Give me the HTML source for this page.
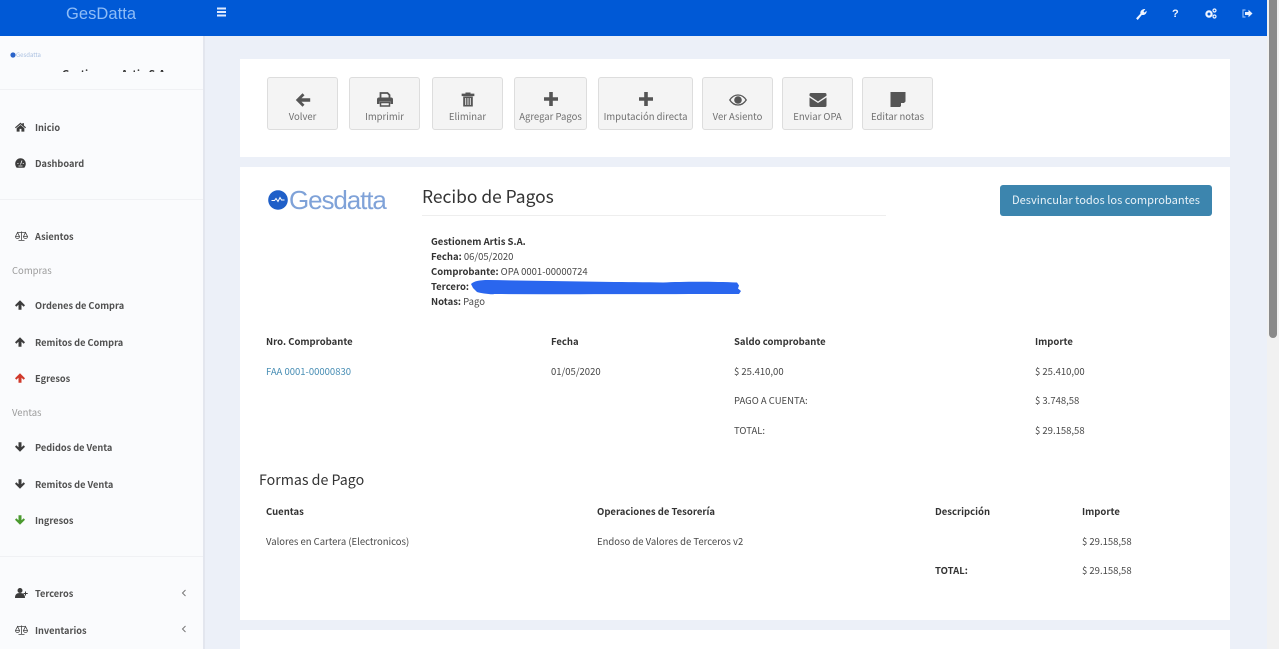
<!DOCTYPE html>
<html lang="es"><head><meta charset="utf-8"><title>GesDatta</title>
<style>
html,body{margin:0;padding:0;width:1279px;height:649px;overflow:hidden;background:#ecf0f8}
body{position:relative;font-family:"Noto Sans CJK JP","Liberation Sans",sans-serif;color:#484848;font-size:9.5px}
.a{position:absolute;white-space:nowrap;line-height:14px}
.m{margin-top:1px}
.b{font-weight:700;color:#333}
.box{position:absolute;background:#fff}
.btn{position:absolute;top:77px;height:51px;background:#f4f4f4;border:1px solid #ddd;border-radius:3px;color:#707070;text-align:center;font-size:9.5px;box-sizing:content-box}
.btn svg{position:absolute;left:50%;top:15px;transform:translateX(-50%)}
.btn span{position:absolute;left:0;right:0;top:31px;line-height:14px;white-space:nowrap}
.nav{position:absolute;left:35px;font-weight:700;font-size:9.2px;color:#505050;line-height:14px;white-space:nowrap}
.sec{position:absolute;left:12px;color:#9a9a9a;font-size:9.5px;line-height:14px}
.ic{position:absolute;left:14px;margin-top:1px}
.hr{position:absolute;left:0;width:203px;height:1px;background:#f0f1f4}
</style></head><body>
<div style="position:absolute;left:0;top:0;width:1267px;height:36px;background:#0059d6"></div>
<div style="position:absolute;left:1267px;top:0;width:12px;height:649px;background:#f1f1f1"></div>
<div style="position:absolute;left:1269px;top:0;width:8px;height:338px;background:#8a8a8a;border-radius:0 0 4px 4px"></div>
<div class="a m" style="left:66px;top:3px;font:300 16.5px/20px 'Liberation Sans',sans-serif;color:#8fbdf7;letter-spacing:.05px">GesDatta</div>
<svg style="position:absolute;left:216px;top:7px" width="11" height="10"><path d="M1 1.500h9M1 5h9M1 8.500h9" stroke="#dfeaff" stroke-width="2"/></svg>

<svg style="position:absolute;left:1135px;top:8px" width="12" height="12" viewBox="0 0 11 11"><path d="M1 9.500l4-4.300C4.500 3.300 6 .6 9.500 1L7.800 3l.9 1.200L10.600 2.500C11 5.300 8.500 7 6.300 6.300L2.500 11z" fill="#f0f5ff"/></svg>
<div class="a m" style="left:1172px;top:5px;font:700 11px/16px 'Liberation Sans',sans-serif;color:#f0f5ff">?</div>
<svg style="position:absolute;left:1205px;top:8px" width="12" height="11" viewBox="0 0 12 11"><circle cx="4" cy="6" r="2.600" fill="none" stroke="#f0f5ff" stroke-width="2.200"/><circle cx="9.500" cy="2.500" r="1.500" fill="none" stroke="#f0f5ff" stroke-width="1.200"/><circle cx="9.500" cy="8.500" r="1.500" fill="none" stroke="#f0f5ff" stroke-width="1.200"/></svg>
<svg style="position:absolute;left:1242px;top:9px" width="11" height="9" viewBox="0 0 11 9"><path d="M3.500 1H1v7h2.500" fill="none" stroke="#8db9f5" stroke-width="1.200"/><path d="M3 3h3.500V.8L10.500 4.500 6.500 8.200V6H3z" fill="#e8f0ff"/></svg>

<div style="position:absolute;left:0;top:36px;width:203px;height:613px;background:#fafbfd;border-right:2px solid #e3e6ee"></div>
<svg style="position:absolute;left:10px;top:52px" width="6" height="6"><circle cx="3" cy="3" r="2.600" fill="#2a63c9"/></svg>
<div class="a m" style="left:16px;top:49px;font-size:6px;line-height:10px;color:#a9bfe0">Gesdatta</div>
<div class="a b m" style="left:62px;top:67px;height:4px;line-height:14px;overflow:hidden;font-size:10.500px;word-spacing:1px">Gestionem Artis S.A.</div>
<div class="hr" style="top:89px"></div><div class="hr" style="top:199px"></div><div class="hr" style="top:556px"></div>

<svg class="ic" style="top:121px;left:15px" width="11" height="10" viewBox="0 0 12 10"><path d="M6 .2L0 5.400l.8 1L6 2l5.200 4.400.8-1L9.700 3.400V.8H8v1.200zM1.800 6.300V10H5V7h2v3h3.200V6.300L6 2.800z" fill="#3c3c3c"/></svg>
<div class="nav" style="top:120px">Inicio</div>
<svg class="ic" style="top:157px;left:15px" width="11" height="10" viewBox="0 0 11 10"><path d="M5.500 .3a5.300 5.300 0 0 0-5.300 5.300c0 1.800.6 3 1.500 4.100h7.600c.9-1.100 1.500-2.300 1.500-4.100A5.300 5.300 0 0 0 5.500 .3z" fill="#3c3c3c"/><path d="M5.500 6.500l1.500-4M2.300 5.500h1.200M7.700 5.500h1.200M3.500 8h4" stroke="#fafbfd" stroke-width=".8"/></svg>
<div class="nav" style="top:156px">Dashboard</div>

<svg class="ic" style="top:230px;left:15px" width="13" height="10" viewBox="0 0 13 10" fill="none" stroke="#444" stroke-width=".8"><path d="M6.500 .5v8.500M3.500 9.500h6M2 1.500h9M2.500 1.500L.5 5.500h4zM10.500 1.500l-2 4h4zM.5 5.500a2 2 0 0 0 4 0M8.500 5.500a2 2 0 0 0 4 0"/></svg>
<div class="nav" style="top:229px">Asientos</div>
<div class="sec" style="top:263px">Compras</div>
<svg class="ic" style="top:299px;left:15px" width="10" height="10" viewBox="0 0 10 10"><path d="M5 .2L10 5.200 8.700 6.700 6.500 4.800V9.800h-3V4.800L1.300 6.700 0 5.200z" fill="#3c3c3c"/></svg>
<div class="nav" style="top:298px">Ordenes de Compra</div>
<svg class="ic" style="top:336px;left:15px" width="10" height="10" viewBox="0 0 10 10"><path d="M5 .2L10 5.200 8.700 6.700 6.500 4.800V9.800h-3V4.800L1.300 6.700 0 5.200z" fill="#3c3c3c"/></svg>
<div class="nav" style="top:335px">Remitos de Compra</div>
<svg class="ic" style="top:372px;left:15px" width="10" height="10" viewBox="0 0 10 10"><path d="M5 .2L10 5.200 8.700 6.700 6.500 4.800V9.800h-3V4.800L1.300 6.700 0 5.200z" fill="#d0392b"/></svg>
<div class="nav" style="top:371px">Egresos</div>
<div class="sec" style="top:405px">Ventas</div>
<svg class="ic" style="top:441px;left:15px" width="10" height="10" viewBox="0 0 10 10"><path d="M5 9.800L0 4.800 1.300 3.300 3.500 5.200V.2h3V5.200L8.700 3.300 10 4.800z" fill="#3c3c3c"/></svg>
<div class="nav" style="top:440px">Pedidos de Venta</div>
<svg class="ic" style="top:478px;left:15px" width="10" height="10" viewBox="0 0 10 10"><path d="M5 9.800L0 4.800 1.300 3.300 3.500 5.200V.2h3V5.200L8.700 3.300 10 4.800z" fill="#3c3c3c"/></svg>
<div class="nav" style="top:477px">Remitos de Venta</div>
<svg class="ic" style="top:514px;left:15px" width="10" height="10" viewBox="0 0 10 10"><path d="M5 9.800L0 4.800 1.300 3.300 3.500 5.200V.2h3V5.200L8.700 3.300 10 4.800z" fill="#4a9a2e"/></svg>
<div class="nav" style="top:513px">Ingresos</div>
<svg class="ic" style="top:587px;left:15px" width="13" height="10" viewBox="0 0 13 10"><circle cx="5" cy="2.500" r="2.500" fill="#3c3c3c"/><path d="M0 10c0-3.500 1.500-5 5-5s5 1.500 5 5zM10 3.500h1v1.500h1.700v1H11v1.500h-1V6H8.500V5H10z" fill="#3c3c3c"/></svg>
<div class="nav" style="top:586px">Terceros</div>
<svg class="ic" style="top:624px;left:15px" width="13" height="10" viewBox="0 0 13 10" fill="none" stroke="#444" stroke-width=".8"><path d="M6.500 .5v8.500M3.500 9.500h6M2 1.500h9M2.500 1.500L.5 5.500h4zM10.500 1.500l-2 4h4zM.5 5.500a2 2 0 0 0 4 0M8.500 5.500a2 2 0 0 0 4 0"/></svg>
<div class="nav" style="top:623px">Inventarios</div>
<svg style="position:absolute;left:181px;top:589px" width="6" height="8"><path d="M4.500 1L1.500 4l3 3" fill="none" stroke="#777" stroke-width="1"/></svg>
<svg style="position:absolute;left:181px;top:625px" width="6" height="8"><path d="M4.500 1L1.500 4l3 3" fill="none" stroke="#777" stroke-width="1"/></svg>

<div class="box" style="left:240px;top:59px;width:990px;height:98px"></div>
<div class="box" style="left:240px;top:167px;width:990px;height:453px"></div>
<div class="box" style="left:240px;top:630px;width:990px;height:19px"></div>

<div class="btn" style="left:267px;width:69px"><svg width="15" height="14" viewBox="0 0 15 14"><path d="M7 .2L.3 7 7 13.800 9 11.800 6 8.800h8.700V5.200H6l3-3z" fill="#555"/></svg><span>Volver</span></div>
<div class="btn" style="left:349px;width:69px"><svg style="top:14px" width="17" height="15" viewBox="0 0 17 15"><path d="M4 6V1h7l2 2v3" fill="none" stroke="#555" stroke-width="1.800"/><path d="M2.500 5.500h12A2 2 0 0 1 16.500 7.500V12H14V9.500H3V12H.5V7.500A2 2 0 0 1 2.500 5.500z" fill="#555"/><path d="M4 10.500h9v3.500H4z" fill="none" stroke="#555" stroke-width="1.500"/></svg><span>Imprimir</span></div>
<div class="btn" style="left:432px;width:69px"><svg style="top:14px" width="13" height="15" viewBox="0 0 13 15"><path d="M.5 2h12v1.800H.5zM4.300 2.500V.8h4.400v1.700" fill="#555" stroke="#555" stroke-width=".7"/><path d="M1.700 4.500h9.600v10H1.700z" fill="#555"/><path d="M4.200 6v7M6.500 6v7M8.800 6v7" stroke="#f4f4f4" stroke-width=".9"/></svg><span>Eliminar</span></div>
<div class="btn" style="left:514px;width:71px"><svg style="top:14px" width="14" height="14" viewBox="0 0 14 14"><path d="M5.200 0h3.600v5.200H14v3.600H8.800V14H5.200V8.800H0V5.200h5.200z" fill="#555"/></svg><span>Agregar Pagos</span></div>
<div class="btn" style="left:598px;width:93px"><svg style="top:14px" width="14" height="14" viewBox="0 0 14 14"><path d="M5.200 0h3.600v5.200H14v3.600H8.800V14H5.200V8.800H0V5.200h5.200z" fill="#555"/></svg><span>Imputación directa</span></div>
<div class="btn" style="left:702px;width:69px"><svg width="18" height="14" viewBox="0 0 18 14"><path d="M.8 7C3 3.500 6 2 9 2s6 1.500 8.200 5C15 10.500 12 12 9 12S3 10.500.8 7z" fill="none" stroke="#555" stroke-width="1.300"/><circle cx="9" cy="7" r="3.800" fill="#555"/></svg><span>Ver Asiento</span></div>
<div class="btn" style="left:782px;width:69px"><svg width="18" height="14" viewBox="0 0 18 14"><path d="M.5 1.500A1.500 1.500 0 0 1 2 0h14a1.500 1.500 0 0 1 1.500 1.500v1.300L9 8.500.5 2.800z" fill="#555"/><path d="M.5 4.500L9 10l8.500-5.500v8A1.500 1.500 0 0 1 16 14H2A1.500 1.500 0 0 1 .5 12.500z" fill="#555"/></svg><span>Enviar OPA</span></div>
<div class="btn" style="left:862px;width:69px"><svg style="top:14px" width="16" height="15" viewBox="0 0 16 15"><path d="M.5 0H15.500V9.500L10 15H.5z" fill="#555"/><path d="M11 11h4l-4 3.500z" fill="#f4f4f4"/></svg><span>Editar notas</span></div>

<svg style="position:absolute;left:268px;top:189px" width="20" height="22" viewBox="0 0 20 22"><circle cx="10" cy="11" r="9.800" fill="#1f5fc8"/><path d="M3.500 11.500h3l1.500-2 2 3 2-4 1.500 2.500h3" fill="none" stroke="#fff" stroke-width="1"/></svg>
<div class="a m" style="left:289px;top:182px;font:300 26px/34px 'Liberation Sans',sans-serif;color:#7fa2d8;letter-spacing:-1.100px">Gesdatta</div>
<div class="a m" style="left:422px;top:183px;font-size:17.400px;line-height:26px;font-weight:400;color:#333">Recibo de Pagos</div>
<div style="position:absolute;left:422px;top:215px;width:464px;height:1px;background:#eee"></div>
<div style="position:absolute;left:1000px;top:185px;width:212px;height:31px;background:#3c85ae;border-radius:3px;color:#e8f2f8;text-align:center;font-size:11.100px;line-height:30px">Desvincular todos los comprobantes</div>

<div class="a b" style="left:431px;top:234px">Gestionem Artis S.A.</div>
<div class="a" style="left:431px;top:249px"><b class="b">Fecha:</b> 06/05/2020</div>
<div class="a" style="left:431px;top:264px"><b class="b">Comprobante:</b> OPA 0001-00000724</div>
<div class="a b" style="left:431px;top:279px">Tercero:</div>
<div class="a" style="left:431px;top:294px"><b class="b">Notas:</b> Pago</div>
<svg style="position:absolute;left:468px;top:278px" width="276" height="20" viewBox="0 0 276 20"><path d="M3 6C6 3 12 2 20 2c60 1 130 2 175 2.500 20-1 50-1 74 0l2 3-1 3 3 2.500-2 3c-70 0-160 .5-245 0C25 17 12 15 9 14L5 10z" fill="#2a66ee"/></svg>

<div class="a b" style="left:266px;top:334px">Nro. Comprobante</div>
<div class="a b" style="left:551px;top:334px">Fecha</div>
<div class="a b" style="left:734px;top:334px">Saldo comprobante</div>
<div class="a b" style="left:1035px;top:334px">Importe</div>
<div class="a" style="left:266px;top:364px;color:#4a8fb5">FAA 0001-00000830</div>
<div class="a" style="left:551px;top:364px">01/05/2020</div>
<div class="a" style="left:734px;top:364px">$ 25.410,00</div>
<div class="a" style="left:1035px;top:364px">$ 25.410,00</div>
<div class="a" style="left:734px;top:393px">PAGO A CUENTA:</div>
<div class="a" style="left:1035px;top:393px">$ 3.748,58</div>
<div class="a" style="left:734px;top:423px">TOTAL:</div>
<div class="a" style="left:1035px;top:423px">$ 29.158,58</div>

<div class="a m" style="left:259px;top:469px;font-size:14.200px;line-height:20px;color:#333">Formas de Pago</div>
<div class="a b" style="left:266px;top:504px">Cuentas</div>
<div class="a b" style="left:597px;top:504px">Operaciones de Tesorería</div>
<div class="a b" style="left:935px;top:504px">Descripción</div>
<div class="a b" style="left:1082px;top:504px">Importe</div>
<div class="a" style="left:266px;top:534px">Valores en Cartera (Electronicos)</div>
<div class="a" style="left:597px;top:534px">Endoso de Valores de Terceros v2</div>
<div class="a" style="left:1082px;top:534px">$ 29.158,58</div>
<div class="a b" style="left:935px;top:563px">TOTAL:</div>
<div class="a" style="left:1082px;top:563px">$ 29.158,58</div>
</body></html>
